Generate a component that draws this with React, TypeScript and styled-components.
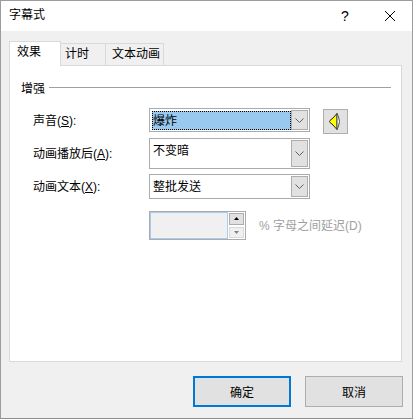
import { createGlobalStyle } from "styled-components";
import styled from "styled-components";

const GlobalStyle = createGlobalStyle`
  html, body {
    margin: 0;
    padding: 0;
    background: #fff;
  }
  body {
    font-family: "Liberation Sans", "Noto Sans CJK SC", sans-serif;
    font-size: 12px;
    color: #000;
  }
`;

const Dialog = styled.div`
  box-sizing: border-box;
  width: 413px;
  height: 419px;
  display: flex;
  flex-direction: column;
  background: #f0f0f0;
  border-top: 1px solid #9c9c9c;
  border-left: 1px solid #9c9c9c;
  border-right: 1px solid #9c9c9c;
  border-bottom: 1px solid #8c8c8c;
`;

const TitleBar = styled.div`
  box-sizing: border-box;
  height: 30px;
  flex: none;
  display: flex;
  align-items: center;
  background: #fff;
  padding: 0 0 1px 8px;
`;

const Title = styled.span`
  flex: 1;
  line-height: 29px;
`;

const HelpMark = styled.span`
  width: 46px;
  text-align: center;
  font-size: 14px;
`;

const CloseButton = styled.span`
  width: 44px;
  height: 29px;
  display: flex;
  align-items: center;
  justify-content: center;
`;

const Body = styled.div`
  flex: 1;
  display: flex;
  flex-direction: column;
  padding: 10px 10px 0 8px;
`;

const TabStrip = styled.div`
  display: flex;
  align-items: flex-end;
  height: 25px;
  flex: none;
  position: relative;
  z-index: 1;
  margin-bottom: -1px;
`;

const Tab = styled.div<{ $active?: boolean; $width: number; $inset: number }>`
  box-sizing: border-box;
  width: ${(p) => p.$width}px;
  height: ${(p) => (p.$active ? 25 : 23)}px;
  border: 1px solid #d9d9d9;
  border-left-width: ${(p) => (p.$active ? 1 : 0)}px;
  border-bottom: ${(p) => (p.$active ? "none" : "1px solid #d9d9d9")};
  background: ${(p) => (p.$active ? "#fff" : "#f0f0f0")};
  padding-left: ${(p) => p.$inset}px;
  line-height: 21px;
`;

const Panel = styled.div`
  box-sizing: border-box;
  height: 297px;
  background: #fff;
  border: 1px solid #d9d9d9;
  padding: 12px 10px 0 11px;
`;

const GroupHeading = styled.div`
  display: flex;
  align-items: center;
  height: 18px;
  gap: 4px;
`;

const GroupRule = styled.div`
  flex: 1;
  height: 1px;
  background: #a0a0a0;
`;

const FormGrid = styled.div`
  display: grid;
  grid-template-columns: 116px 161px auto;
  grid-template-rows: 25px 31px 25px;
  row-gap: 5px;
  margin-top: 12px;
  padding-left: 12px;
  align-items: start;
`;

const FieldLabel = styled.label`
  align-self: center;
  padding-bottom: 2px;

  u {
    text-underline-offset: 1px;
  }
`;

const SelectBox = styled.div<{ $height: number }>`
  box-sizing: border-box;
  height: ${(p) => p.$height}px;
  border: 1px solid #ababab;
  background: #fff;
  display: flex;
  padding: 1px;
`;

const SelectValue = styled.div<{ $focused?: boolean }>`
  flex: 1;
  margin: 1px 0 1px 1px;
  background: ${(p) => (p.$focused ? "#99c9ef" : "#fff")};
  outline: ${(p) => (p.$focused ? "1px dotted #000" : "none")};
  outline-offset: -1px;
  padding-left: 1px;
  line-height: 21px;
  height: 19px;
`;

const DropButton = styled.div`
  box-sizing: border-box;
  width: 17px;
  flex: none;
  background: #e1e1e1;
  border: 1px solid #adadad;
  display: flex;
  align-items: center;
  justify-content: center;
`;

const SoundButton = styled.div`
  box-sizing: border-box;
  width: 25px;
  height: 25px;
  margin: 1px 0 0 13px;
  padding-right: 3px;
  background: #e1e1e1;
  border: 1px solid #adadad;
  display: flex;
  align-items: center;
  justify-content: center;
`;

const DelayRow = styled.div`
  display: flex;
  align-items: center;
  margin: 12px 0 0 128px;
  height: 29px;
`;

const Spinner = styled.div`
  box-sizing: border-box;
  width: 97px;
  height: 29px;
  border: 1px solid #ababab;
  display: flex;
  background: #fff;
`;

const SpinnerInput = styled.div`
  flex: 1;
  background: #f0f0f0;
  box-shadow: inset 1px 1px 0 #a9cbed, inset -1px -1px 0 #a9cbed;
`;

const SpinnerArrows = styled.div`
  width: 15px;
  flex: none;
  margin: 1px;
  display: flex;
  flex-direction: column;
  gap: 2px;
`;

const SpinnerButton = styled.div<{ $disabled?: boolean }>`
  box-sizing: border-box;
  flex: 1;
  background: ${(p) => (p.$disabled ? "#f0f0f0" : "#e1e1e1")};
  border: 1px solid ${(p) => (p.$disabled ? "#d9d9d9" : "#adadad")};
  display: flex;
  align-items: center;
  justify-content: center;
`;

const DisabledText = styled.span`
  margin-left: 13px;
  padding-bottom: 2px;
  color: #a0a0a0;
`;

const Footer = styled.div`
  display: flex;
  justify-content: flex-end;
  gap: 14px;
  margin-top: 14px;
  margin-right: -1px;
`;

const DialogButton = styled.div<{ $primary?: boolean }>`
  box-sizing: border-box;
  width: 98px;
  height: 31px;
  background: #e1e1e1;
  border: ${(p) => (p.$primary ? "2px solid #0078d7" : "1px solid #adadad")};
  display: flex;
  align-items: center;
  justify-content: center;
`;

const Chevron = () => (
  <svg width="9" height="5" viewBox="0 0 9 5">
    <path d="M0.5 0.5 L4.5 4.5 L8.5 0.5" fill="none" stroke="#606060" />
  </svg>
);

const Triangle = ({ down, color }: { down?: boolean; color: string }) => (
  <svg width="5" height="3" viewBox="0 0 5 3">
    <path d={down ? "M0 0 H5 L2.5 3 Z" : "M0 3 H5 L2.5 0 Z"} fill={color} />
  </svg>
);

const SpeakerIcon = () => (
  <svg width="11" height="17" viewBox="0 0 11 17">
    <path d="M8 0.5 L8 16.5 L4 12 L1 9.5 L0.5 8.5 L1 7.5 L4 5 Z" fill="#ffff00" stroke="#202020" strokeWidth="1" />
    <path d="M8 0.5 L9.5 4 L10.5 8.5 L9.5 13 L8 16.5 Z" fill="#fff" stroke="#505050" strokeWidth="1" />
  </svg>
);

const CloseIcon = () => (
  <svg width="12" height="12" viewBox="0 0 12 12">
    <path d="M1 1 L11 11 M11 1 L1 11" stroke="#000" strokeWidth="1" fill="none" />
  </svg>
);

const App = () => {
  return (
    <>
      <GlobalStyle />
      <Dialog>
        <TitleBar>
          <Title>字幕式</Title>
          <HelpMark>?</HelpMark>
          <CloseButton>
            <CloseIcon />
          </CloseButton>
        </TitleBar>
        <Body>
          <TabStrip>
            <Tab $active $width={52} $inset={7}>效果</Tab>
            <Tab $width={45} $inset={4}>计时</Tab>
            <Tab $width={58} $inset={6}>文本动画</Tab>
          </TabStrip>
          <Panel>
            <GroupHeading>
              增强
              <GroupRule />
            </GroupHeading>
            <FormGrid>
              <FieldLabel>声音(<u>S</u>):</FieldLabel>
              <SelectBox $height={24}>
                <SelectValue $focused>爆炸</SelectValue>
                <DropButton><Chevron /></DropButton>
              </SelectBox>
              <SoundButton><SpeakerIcon /></SoundButton>

              <FieldLabel>动画播放后(<u>A</u>):</FieldLabel>
              <SelectBox $height={31}>
                <SelectValue>不变暗</SelectValue>
                <DropButton><Chevron /></DropButton>
              </SelectBox>
              <span />

              <FieldLabel>动画文本(<u>X</u>):</FieldLabel>
              <SelectBox $height={25}>
                <SelectValue>整批发送</SelectValue>
                <DropButton><Chevron /></DropButton>
              </SelectBox>
              <span />
            </FormGrid>
            <DelayRow>
              <Spinner>
                <SpinnerInput />
                <SpinnerArrows>
                  <SpinnerButton><Triangle color="#000" /></SpinnerButton>
                  <SpinnerButton $disabled><Triangle down color="#808080" /></SpinnerButton>
                </SpinnerArrows>
              </Spinner>
              <DisabledText>% 字母之间延迟(D)</DisabledText>
            </DelayRow>
          </Panel>
          <Footer>
            <DialogButton $primary>确定</DialogButton>
            <DialogButton>取消</DialogButton>
          </Footer>
        </Body>
      </Dialog>
    </>
  );
};

export default App;
